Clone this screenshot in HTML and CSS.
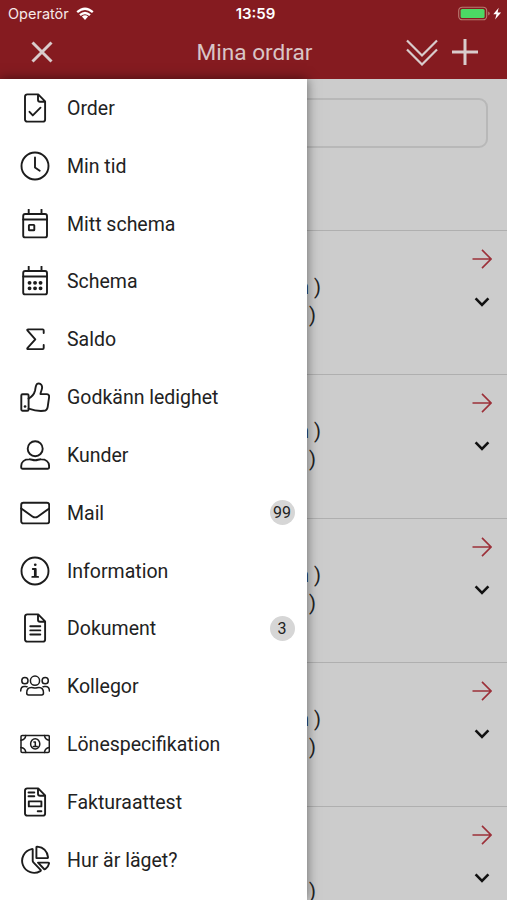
FILE: index.html
```
<!DOCTYPE html>
<html lang="sv">
  <head>
    <meta charset="UTF-8" />
    <meta name="viewport" content="width=device-width, initial-scale=1.0" />
    <title>Mina ordrar</title>
    <link rel="stylesheet" href="styles.css">
  </head>
  <body>
    <div class="app">
      <header class="header">
        <!-- Status bar -->
        <div class="status-bar">
          <div class="carrier">
            <span>Operatör</span>
            <svg width="18" height="14" viewBox="0 0 18 14" fill="none" stroke="#fff" stroke-width="2.3">
              <path d="M1.2 5.2Q9-1.8 16.8 5.2M4 8.2Q9 3.8 14 8.2" />
              <path d="M5.9 9.5Q9 7 12.1 9.5L9 13z" fill="#fff" stroke="none" />
            </svg>
          </div>
          <span class="time">13:59</span>
          <div class="battery">
            <svg width="44" height="16" viewBox="0 0 44 16">
              <rect x="0.7" y="1.2" width="28" height="12.6" rx="3.6" fill="none" stroke="#b97b72" stroke-width="1.1" />
              <rect x="2.6" y="3" width="24" height="9" rx="1.6" fill="#4cd964" />
              <path d="M30.2 5.5v4q1.5-.6 1.5-2t-1.5-2z" fill="#b97b72" />
              <path d="M40.7 1.8 35.3 8.2h3.2l-1.4 5.4 6-7h-3.5z" fill="#fff" />
            </svg>
          </div>
        </div>

        <!-- Title bar -->
        <div class="title-bar">
          <button class="icon-btn close-btn" type="button" aria-label="Stäng">
            <svg width="22" height="22" viewBox="0 0 22 22"><path d="M1.5 1.5l19 19M20.5 1.5l-19 19" /></svg>
          </button>
          <h1>Mina ordrar</h1>
          <div class="actions">
            <button class="icon-btn" type="button" aria-label="Visa alla">
              <svg class="thin" width="32" height="27" viewBox="0 0 32 27"><path d="M1 1.5l15 15 15-15M1 10.5l15 15 15-15" /></svg>
            </button>
            <button class="icon-btn" type="button" aria-label="Ny order">
              <svg width="26" height="26" viewBox="0 0 26 26"><path d="M13 0v26M0 13h26" /></svg>
            </button>
          </div>
        </div>
      </header>

      <!-- Orders -->
      <main class="content">
        <div class="search">
          <div class="search-box"></div>
        </div>
        <div class="order">
          <div class="order-text"><p>n )</p><p class="second">)</p></div>
          <div class="order-icons">
            <svg class="arrow" width="20" height="20" viewBox="0 0 20 20"><path d="M.5 10h18M10 .9l9 9.1-9 9.1" /></svg>
            <svg class="chevron" width="16" height="10" viewBox="0 0 16 10"><path d="M1.6 1.4L8 7.8l6.4-6.4" /></svg>
          </div>
        </div>
        <div class="order">
          <div class="order-text"><p>n )</p><p class="second">)</p></div>
          <div class="order-icons">
            <svg class="arrow" width="20" height="20" viewBox="0 0 20 20"><path d="M.5 10h18M10 .9l9 9.1-9 9.1" /></svg>
            <svg class="chevron" width="16" height="10" viewBox="0 0 16 10"><path d="M1.6 1.4L8 7.8l6.4-6.4" /></svg>
          </div>
        </div>
        <div class="order">
          <div class="order-text"><p>n )</p><p class="second">)</p></div>
          <div class="order-icons">
            <svg class="arrow" width="20" height="20" viewBox="0 0 20 20"><path d="M.5 10h18M10 .9l9 9.1-9 9.1" /></svg>
            <svg class="chevron" width="16" height="10" viewBox="0 0 16 10"><path d="M1.6 1.4L8 7.8l6.4-6.4" /></svg>
          </div>
        </div>
        <div class="order">
          <div class="order-text"><p>n )</p><p class="second">)</p></div>
          <div class="order-icons">
            <svg class="arrow" width="20" height="20" viewBox="0 0 20 20"><path d="M.5 10h18M10 .9l9 9.1-9 9.1" /></svg>
            <svg class="chevron" width="16" height="10" viewBox="0 0 16 10"><path d="M1.6 1.4L8 7.8l6.4-6.4" /></svg>
          </div>
        </div>
        <div class="order">
          <div class="order-text"><p></p><p class="second">)</p></div>
          <div class="order-icons">
            <svg class="arrow" width="20" height="20" viewBox="0 0 20 20"><path d="M.5 10h18M10 .9l9 9.1-9 9.1" /></svg>
            <svg class="chevron" width="16" height="10" viewBox="0 0 16 10"><path d="M1.6 1.4L8 7.8l6.4-6.4" /></svg>
          </div>
        </div>
      </main>

      <!-- Side menu -->
      <nav class="menu">
        <a class="menu-item">
          <svg viewBox="0 0 30 30"><path d="M7.2 1.4h11l6.9 7v18a2.2 2.2 0 0 1-2.2 2.2H7.2A2.2 2.2 0 0 1 5 26.4V3.6a2.2 2.2 0 0 1 2.2-2.2zM18 1.6v5.2a2 2 0 0 0 2 2h5M9.5 18.8l3.3 3.6 7.7-7.7" /></svg>
          <span>Order</span>
        </a>
        <a class="menu-item">
          <svg viewBox="0 0 30 30"><circle cx="15" cy="15" r="13.5" /><path d="M15 6.5v10l4.7 3.2" /></svg>
          <span>Min tid</span>
        </a>
        <a class="menu-item">
          <svg viewBox="0 0 30 30"><rect x="3.2" y="5" width="23.8" height="23.4" rx="2" /><path d="M3.2 10.5H27M8.7 .5V5M21.5 .5V5" /><rect x="8.9" y="15.9" width="5.4" height="5.4" rx=".6" /></svg>
          <span>Mitt schema</span>
        </a>
        <a class="menu-item">
          <svg viewBox="0 0 30 30"><rect x="3.2" y="5" width="23.8" height="23.4" rx="2" /><path d="M3.2 10.5H27M8.7 .5V5M21.5 .5V5" /><path class="dots" d="M9.5 16.8h.1M15 16.8h.1M20.5 16.8h.1M9.5 22.3h.1M15 22.3h.1M20.5 22.3h.1" /></svg>
          <span>Schema</span>
        </a>
        <a class="menu-item">
          <svg viewBox="0 0 30 30"><path d="M23.7 9V6.4a1 1 0 0 0-1-1H8.2q-1.6 0-.6 1.3L15.3 15.3l-7.7 8.5q-1 1.3.6 1.3h14.5a1 1 0 0 0 1-1V21" /></svg>
          <span>Saldo</span>
        </a>
        <a class="menu-item">
          <svg viewBox="0 0 30 30"><rect x="1.3" y="12.3" width="7.3" height="16.5" rx="1.3" /><path d="M8.6 16.6c4-2.2 5.7-5 6.4-7.8.6-3 .6-6.6 2.7-7.2 3.2-.8 5 2 4.2 5.3-.4 2-1.4 3.5-1.4 5.2h6.1c2 0 2.7 1.5 2.5 3.1l-1.4 9.7c-.4 2.7-1.6 3.9-4 3.9-5.3.6-10.5-.6-15.1-2.2" /><path class="small-dot" d="M5 24.5h.1" /></svg>
          <span>Godkänn ledighet</span>
        </a>
        <a class="menu-item">
          <svg viewBox="0 0 30 30"><circle cx="15.2" cy="8.7" r="7.5" /><path d="M9.2 19.3c2-.1 3.7.9 5.9.9s4-1 6-.9c4.8 0 8 2.7 8 6.8v1.2q0 1.5-1.5 1.5H2.7q-1.5 0-1.5-1.5V26c0-4 3.3-6.7 8-6.7z" /></svg>
          <span>Kunder</span>
        </a>
        <a class="menu-item">
          <svg viewBox="0 0 30 30"><rect x="1.2" y="4.8" width="28" height="20.6" rx="2.2" /><path d="M1.2 10.4l11.2 8q2.8 2 5.6 0l11.2-8" /></svg>
          <span>Mail</span>
          <b class="badge">99</b>
        </a>
        <a class="menu-item">
          <svg viewBox="0 0 30 30"><circle cx="15" cy="15" r="13.5" /><path d="M12.8 13h2.9v7.6M12.3 20.9h5.8M14.9 13.5v7" /><path class="small-dot" d="M15.2 8.8h.1" /></svg>
          <span>Information</span>
        </a>
        <a class="menu-item">
          <svg viewBox="0 0 30 30"><path d="M7.2 1.4h11l6.9 7v18a2.2 2.2 0 0 1-2.2 2.2H7.2A2.2 2.2 0 0 1 5 26.4V3.6a2.2 2.2 0 0 1 2.2-2.2zM18 1.6v5.2a2 2 0 0 0 2 2h5M10.3 13.3h10M10.3 17.4h10M10.3 21.5h10" /></svg>
          <span>Dokument</span>
          <b class="badge">3</b>
        </a>
        <a class="menu-item">
          <svg class="light" viewBox="0 0 30 30"><circle cx="15" cy="9.7" r="4.6" /><circle cx="4.9" cy="9.7" r="3.1" /><circle cx="25.2" cy="9.7" r="3.1" /><path d="M11.2 16.5c1.5 0 2.4.6 3.9.6s2.4-.6 3.9-.6c3 0 4.5 2.5 4.5 5.5q0 1.9-1.8 1.9H8.5q-1.8 0-1.8-1.9c0-3 1.5-5.5 4.5-5.5zM.7 20c0-3 1.3-4.6 3.6-4.6 1.2 0 1.6.4 2.8.4M29.4 20c0-3-1.3-4.6-3.6-4.6-1.2 0-1.6.4-2.8.4" /></svg>
          <span>Kollegor</span>
        </a>
        <a class="menu-item">
          <svg class="light" viewBox="0 0 30 30"><rect x="1" y="6.4" width="28.3" height="17" rx="1.2" /><ellipse cx="15.2" cy="14.9" rx="4.6" ry="5.2" /><path d="M1 11.2q4.3-.5 4.8-4.8M29.3 11.2q-4.3-.5-4.8-4.8M1 18.6q4.3.5 4.8 4.8M29.3 18.6q-4.3.5-4.8 4.8M13.9 13h1.4v4.3M13.3 17.4h3.9" /></svg>
          <span>Lönespecifikation</span>
        </a>
        <a class="menu-item">
          <svg viewBox="0 0 30 30"><path d="M7.2 1.4h11l6.9 7v18a2.2 2.2 0 0 1-2.2 2.2H7.2A2.2 2.2 0 0 1 5 26.4V3.6a2.2 2.2 0 0 1 2.2-2.2zM18 1.6v5.2a2 2 0 0 0 2 2h5M8.5 5.5h5.8M8.5 9.3h5.8M8.8 14.4h12.6v5H8.8zM17.7 24.2h3.7" /></svg>
          <span>Fakturaattest</span>
        </a>
        <a class="menu-item">
          <svg viewBox="0 0 30 30"><path d="M12.7 4.2v11.5q0 1 .7 1.7l7.2 7.5q.6.7-.3 1.2A12 12 0 1 1 11.5 4.1q1.2-.3 1.2.9zM16.4 2.3q0-.8.9-.7 9.5 1 10.7 10.6.1.9-.8.9H16.4zM18 17.6h10.2q1 0 .8 1-.7 3.3-3.6 5.5-.7.5-1.3-.1z" /></svg>
          <span>Hur är läget?</span>
        </a>
      </nav>
    </div>
  </body>
</html>
```
FILE: styles.css
```
/* General Styles */
* {
  box-sizing: border-box;
}

body {
  margin: 0;
  font-family: Roboto, "Liberation Sans", sans-serif;
  background-color: #ccc;
  color: #222;
}

.app {
  position: relative;
  height: 900px;
  overflow: hidden;
}

/* Header */
.header {
  height: 79px;
  background-color: #851b20;
  color: #d9c5c6;
}

.status-bar {
  display: grid;
  grid-template-columns: 1fr auto 1fr;
  align-items: center;
  height: 27px;
  padding: 0 5px 0 8px;
  font-family: Inter, sans-serif;
  font-size: 14.5px;
  color: #f6e9e9;
}

.carrier {
  display: flex;
  align-items: center;
  gap: 7px;
}

.time {
  padding-left: 1px;
  font-size: 15px;
  font-weight: 600;
  color: #fff;
}

.battery {
  display: flex;
  justify-content: flex-end;
}

.title-bar {
  display: grid;
  grid-template-columns: 1fr auto 1fr;
  align-items: center;
  height: 50px;
  padding: 0 29px 0 31px;
}

h1 {
  margin: 0;
  font-size: 22.6px;
  font-weight: 400;
}

.actions {
  display: flex;
  align-items: center;
  justify-content: flex-end;
  gap: 14px;
}

.icon-btn {
  display: flex;
  padding: 0;
  border: none;
  background: none;
}

.icon-btn svg {
  fill: none;
  stroke: #d9cccc;
  stroke-width: 3;
}

.icon-btn .thin {
  stroke-width: 2.2;
}

/* Orders */
.search {
  height: 150.5px;
  padding: 19px 19px 0;
}

.search-box {
  height: 50px;
  border: 2px solid #b8b8b8;
  border-radius: 9px;
}

.order {
  display: flex;
  justify-content: space-between;
  height: 144.1px;
  border-top: 1.5px solid #afafaf;
}

.order-text {
  width: 321px;
  padding-top: 42px;
  font-size: 20px;
  line-height: 28px;
  text-align: right;
}

.order-text p {
  height: 28px;
  margin: 0;
}

.order-text .second {
  padding-right: 5px;
}

.order-icons {
  display: flex;
  flex-direction: column;
  align-items: center;
  gap: 28.5px;
  padding: 18px 15px 0 0;
}

.order-icons svg {
  fill: none;
}

.arrow {
  stroke: #9c3039;
  stroke-width: 1.6;
}

.chevron {
  stroke: #111;
  stroke-width: 2.6;
}

/* Side menu */
.menu {
  position: absolute;
  top: 79px;
  left: 0;
  bottom: 0;
  width: 306.5px;
  background-color: #fff;
  box-shadow: 0 0 11px rgba(0, 0, 0, 0.5);
}

.menu-item {
  display: flex;
  align-items: center;
  height: 57.84px;
  padding: 0 12px 0 20px;
  font-size: 19.5px;
}

.menu-item span {
  padding-top: 1px;
}

.menu-item svg {
  width: 30px;
  height: 30px;
  margin-right: 17px;
  fill: none;
  stroke: #1c1c1c;
  stroke-width: 1.9;
  stroke-linecap: round;
  stroke-linejoin: round;
}

.menu-item .light {
  stroke-width: 1.5;
}

.menu-item .dots {
  stroke-width: 3.8;
}

.menu-item .small-dot {
  stroke-width: 2.6;
}

.badge {
  width: 25px;
  height: 25px;
  margin-left: auto;
  border-radius: 50%;
  background-color: #d6d6d6;
  font-size: 16px;
  font-weight: 400;
  line-height: 25px;
  text-align: center;
}
```
